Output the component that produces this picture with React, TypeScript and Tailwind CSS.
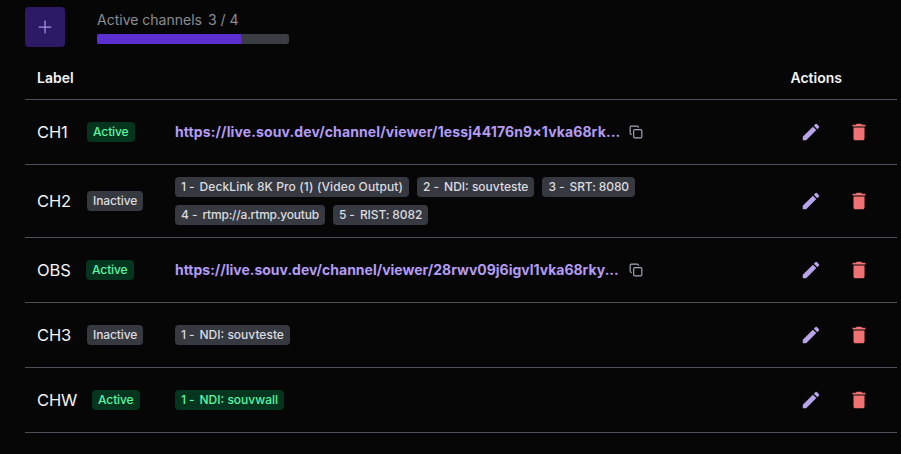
import { Plus, Copy } from "lucide-react";
import { MdEdit, MdDelete } from "react-icons/md";

type Output = { n: string; text: string; fit?: string };

type Row = {
    label: string;
    labelW: string;
    active: boolean;
    url?: string;
    fit?: string;
    outputs?: Output[];
    green?: boolean;
    h: string;
};

const rows: Row[] = [
    { label: "CH1", labelW: "w-[34px]", active: true, url: "https://live.souv.dev/channel/viewer/1essj44176n9×1vka68rk...", fit: "tracking-[0.12px]", h: "h-[65px]" },
    {
        label: "CH2",
        labelW: "w-[34px]",
        active: false,
        outputs: [
            { n: "1", text: "DeckLink 8K Pro (1) (Video Output)", fit: "tracking-[0.12px]" },
            { n: "2", text: "NDI: souvteste" },
            { n: "3", text: "SRT: 8080", fit: "tracking-[-0.1px]" },
            { n: "4", text: "rtmp://a.rtmp.youtub", fit: "tracking-[-0.2px]" },
            { n: "5", text: "RIST: 8082", fit: "tracking-[-0.1px]" },
        ],
        h: "h-[73px]",
    },
    { label: "OBS", labelW: "w-[33px]", active: true, url: "https://live.souv.dev/channel/viewer/28rwv09j6igvl1vka68rky...", h: "h-[65px]" },
    { label: "CH3", labelW: "w-[34px]", active: false, outputs: [{ n: "1", text: "NDI: souvteste" }], h: "h-[65px]" },
    { label: "CHW", labelW: "w-[39px]", active: true, outputs: [{ n: "1", text: "NDI: souvwall" }], green: true, h: "h-[65px]" },
];

function Badge({ green, children }: { green?: boolean; children: React.ReactNode }) {
    return (
        <span className={`inline-flex h-5 items-center whitespace-pre rounded-[4px] px-1.5 text-[12px] font-medium ${green ? "bg-[#05341f] text-[#5bf7a4]" : "bg-[#36393f] text-[#dcdce0]"}`}>
            {children}
        </span>
    );
}

export default function App() {
    return (
        <div className="h-[454px] w-[901px] overflow-hidden bg-[#060606] pl-[25px] pr-[4px] pt-[7px] font-['Inter',sans-serif] text-white">
            <div className="flex items-start">
                <button className="flex h-10 w-10 items-center justify-center rounded-[4px] bg-[#2d1a66] text-[#a993e6]">
                    <Plus size={20} strokeWidth={1.5} />
                </button>
                <div className="ml-8 w-[192px] pt-[4px]">
                    <div className="flex h-[17px] items-center gap-1.5 text-[14px] text-[#8b8d92]">
                        <span>Active channels</span>
                        <span>3 / 4</span>
                    </div>
                    <div className="mt-[6px] h-2.5 overflow-hidden rounded-[2px] bg-[#3a3d42]">
                        <div className="h-full w-3/4 bg-[#5b2fd0]" />
                    </div>
                </div>
            </div>

            <div className="mt-[5px] flex h-[48px] items-center justify-between border-b border-[#4f4f55] pl-3 pr-[55px] pt-[3px] text-[14px] font-semibold text-[#f4f4f5]">
                <span>Label</span>
                <span>Actions</span>
            </div>

            {rows.map(r => (
                <div key={r.label} className={`flex items-center border-b border-[#4f4f55] pl-3 ${r.h}`}>
                    <div className="flex w-[138px] shrink-0 items-center gap-4">
                        <span className={`mt-[1px] whitespace-nowrap text-[16.5px] tracking-[-0.1px] text-[#f4f4f5] ${r.labelW}`}>{r.label}</span>
                        <Badge green={r.active}>
                            <span className="tracking-[-0.1px]">{r.active ? "Active" : "Inactive"}</span>
                        </Badge>
                    </div>
                    <div className="w-[625px] shrink-0">
                        {r.url && (
                            <div className="flex items-center gap-2">
                                <span className={`mb-[2px] w-[445px] whitespace-nowrap text-[14px] font-bold text-[#b39cf5] ${r.fit ?? ""}`}>{r.url}</span>
                                <Copy size={14} className="ml-px text-[#a5a5ba]" />
                            </div>
                        )}
                        {r.outputs && (
                            <div className="flex max-w-[470px] flex-wrap gap-2">
                                {r.outputs.map(o => (
                                    <Badge key={o.n} green={r.green}>
                                        {o.n}
                                        <span className="ml-[3px] mr-[5px]">-</span>
                                        <span className={o.fit}>{o.text}</span>
                                    </Badge>
                                ))}
                            </div>
                        )}
                    </div>
                    <div className="flex items-center gap-[26px]">
                        <MdEdit size={22} className="text-[#b7a4ea]" />
                        <MdDelete size={22} className="text-[#ee7272]" />
                    </div>
                </div>
            ))}
        </div>
    );
}
